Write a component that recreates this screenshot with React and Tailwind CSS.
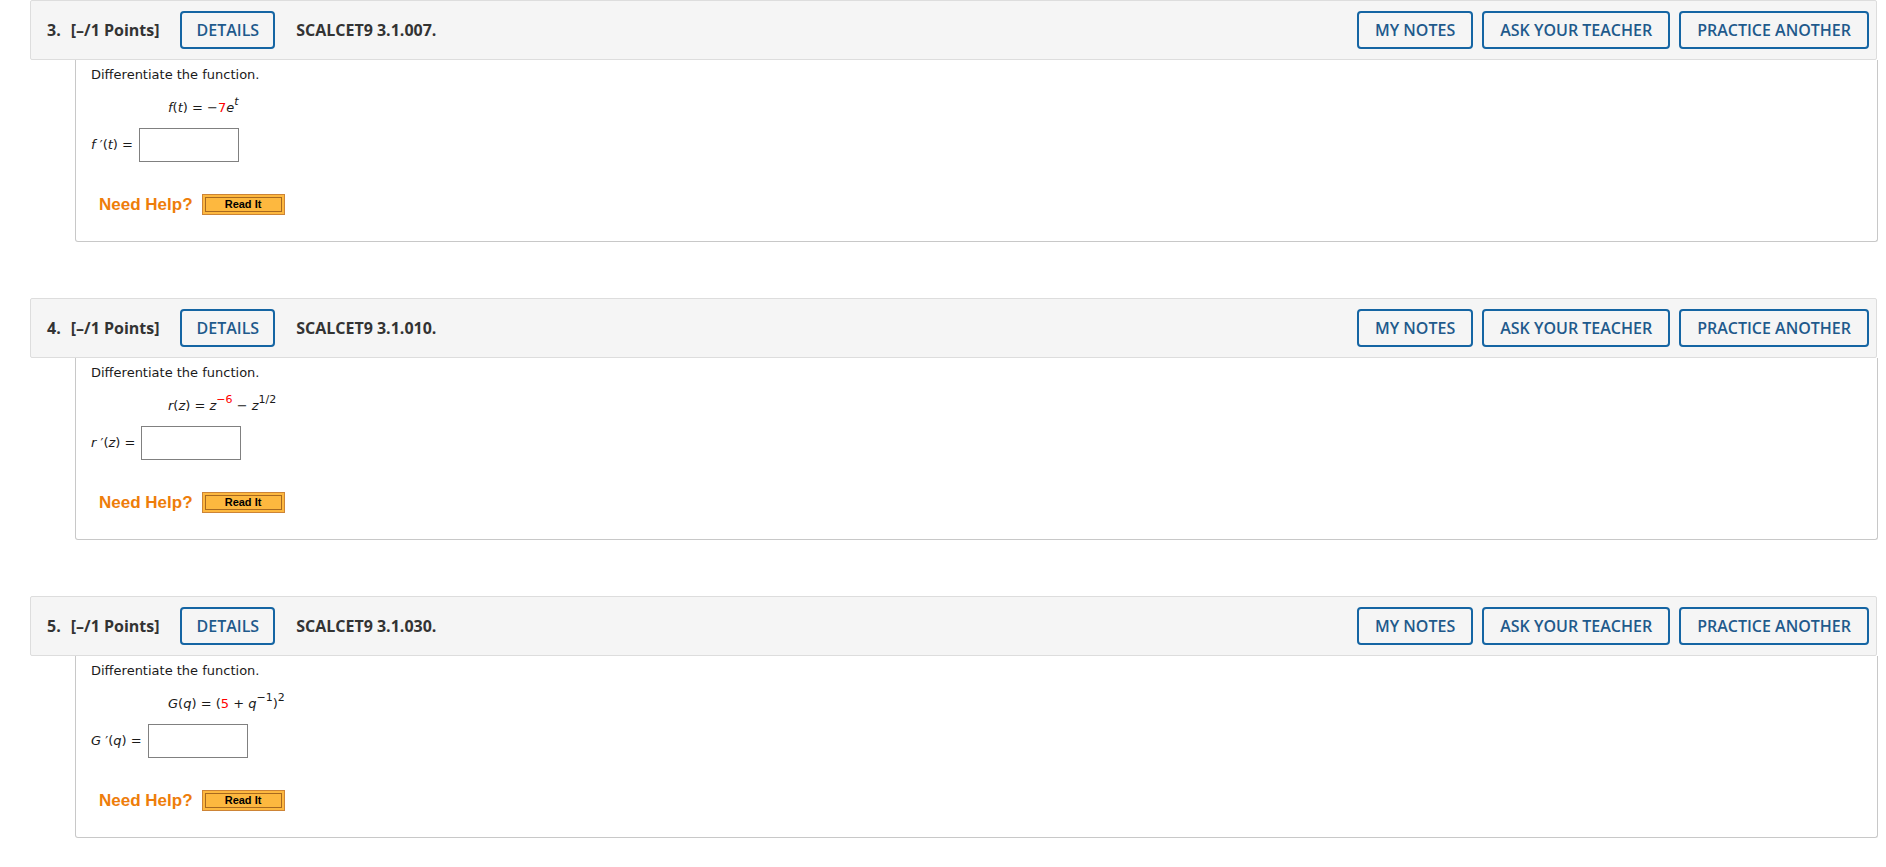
import React from 'react';

const problems = [
  {
    num: '3.',
    code: 'SCALCET9 3.1.007.',
    formula: (
      <>
        <i>f</i>(<i>t</i>) = −<span className="text-[#ff0000]">7</span><i>e</i>
        <sup className="text-[11px] top-[-0.6em]"><i>t</i></sup>
      </>
    ),
    label: (
      <>
        <i>f</i> ′(<i>t</i>) =
      </>
    ),
  },
  {
    num: '4.',
    code: 'SCALCET9 3.1.010.',
    formula: (
      <>
        <i>r</i>(<i>z</i>) = <i>z</i>
        <sup className="text-[11px] top-[-0.6em] text-[#ff0000]">−6</sup> − <i>z</i>
        <sup className="text-[11px] top-[-0.6em]">1/2</sup>
      </>
    ),
    label: (
      <>
        <i>r</i> ′(<i>z</i>) =
      </>
    ),
  },
  {
    num: '5.',
    code: 'SCALCET9 3.1.030.',
    formula: (
      <>
        <i>G</i>(<i>q</i>) = (<span className="text-[#ff0000]">5</span> + <i>q</i>
        <sup className="text-[11px] top-[-0.6em]">−1</sup>)
        <sup className="text-[11px] top-[-0.6em]">2</sup>
      </>
    ),
    label: (
      <>
        <i>G</i> ′(<i>q</i>) =
      </>
    ),
  },
];

const HeaderButton = ({ children, narrow = false }) => (
  <button
    className={`h-[38px] ${narrow ? 'px-[14px]' : 'px-[16px]'} border-2 border-[#1565a3] rounded-[4px] text-[16px] font-semibold text-[#1f5a8c] font-['Open_Sans',sans-serif]`}
  >
    {children}
  </button>
);

const ReadIt = () => (
  <div className="w-[83px] h-[21px] border border-[#cd8436] bg-[#fdb83f] p-[2px]">
    <div className="h-full border border-[#a8691f] flex items-center justify-center text-[11px] font-bold text-black font-['Liberation_Sans',Arial,sans-serif] leading-none">
      Read It
    </div>
  </div>
);

const Problem = ({ p }) => (
  <div className="mb-[56px]">
    {/* Header */}
    <div className="ml-[30px] w-[1847px] h-[60px] flex items-center border border-[#dddddd] bg-[#f5f5f5] rounded-[2px] pl-[16px] pr-[7px] font-['Open_Sans',sans-serif] text-[16px] text-[#333]">
      <span className="font-bold mr-[10px]">{p.num}</span>
      <span className="font-bold mr-[21px]">[–/1 Points]</span>
      <HeaderButton narrow>DETAILS</HeaderButton>
      <span className="font-bold ml-[21px]">{p.code}</span>
      <div className="ml-auto flex gap-[9px]">
        <HeaderButton>MY NOTES</HeaderButton>
        <HeaderButton>ASK YOUR TEACHER</HeaderButton>
        <HeaderButton>PRACTICE ANOTHER</HeaderButton>
      </div>
    </div>

    {/* Body */}
    <div className="ml-[75px] w-[1803px] h-[182px] border border-t-0 border-[#c8c8c8] rounded-b-[3px] bg-white pl-[15px] pt-[7px] font-['DejaVu_Sans',Verdana,sans-serif] text-[13px] text-[#1a1a1a]">
      <div className="leading-[16px]">Differentiate the function.</div>
      <div className="leading-[16px] mt-[17px] ml-[77px] whitespace-pre">{p.formula}</div>
      <div className="mt-[12px] flex items-center h-[34px]">
        <span>{p.label}</span>
        <div className="ml-[6px] w-[100px] h-[34px] border border-[#808080] bg-white" />
      </div>
      <div className="mt-[30px] ml-[8px] flex items-center gap-[9px]">
        <span className="font-['Liberation_Sans',Arial,sans-serif] font-bold text-[17px] text-[#ee7d0a]">
          Need Help?
        </span>
        <ReadIt />
      </div>
    </div>
  </div>
);

export default function App() {
  return (
    <div className="w-[1886px] min-h-[867px] bg-white">
      {problems.map((p) => (
        <Problem key={p.num} p={p} />
      ))}
    </div>
  );
}
